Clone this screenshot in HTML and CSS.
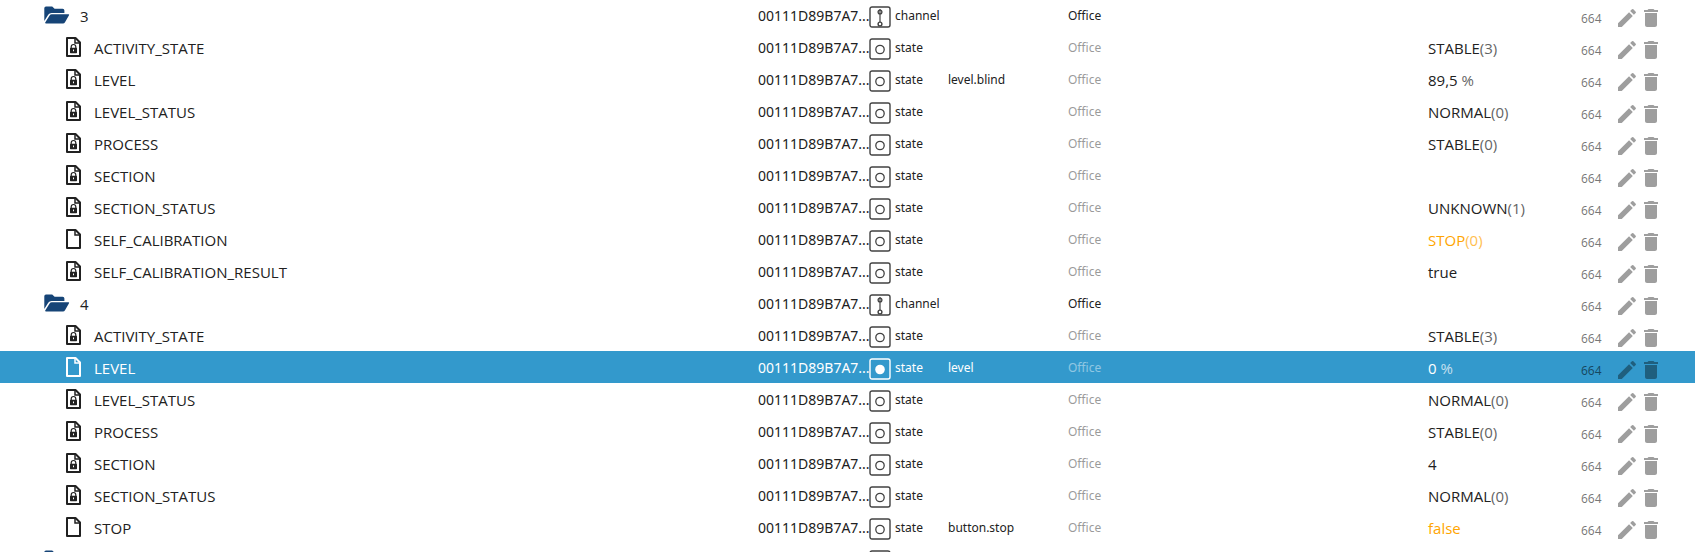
FILE: index.html
```html
<!DOCTYPE html>
<html lang="en">
<head>
    <meta charset="UTF-8">
    <title>Objects</title>
    <link rel="stylesheet" href="styles.css">
</head>
<body>
<svg class="symbols" aria-hidden="true">
    <symbol id="folder" viewBox="0 0 26 18">
        <path d="M0.3 2.2Q0.3 0.4 2 0.4H8.2L10.6 2.8H18.6Q20.4 2.8 20.4 4.6V7H7.6Q5.4 7 4.2 8.8L0.3 15Z"/>
        <path d="M1.2 16.6L5.6 9.4Q6.3 8.2 7.8 8.2H24.4Q25.6 8.2 25 9.3L21 16.2Q20.3 17.4 19 17.4H1.8Q0.8 17.4 1.2 16.6Z"/>
    </symbol>
    <symbol id="file" viewBox="0 0 15 20">
        <path d="M1 1H9.5L14 5.5V19H1Z" fill="none" stroke="currentColor" stroke-width="2" stroke-linejoin="round"/>
        <path d="M9 1V6H14" fill="none" stroke="currentColor" stroke-width="1.5"/>
    </symbol>
    <symbol id="locked" viewBox="0 0 15 20">
        <use href="#file"/>
        <path d="M5.2 11V9.8A2.3 2.3 0 0 1 9.8 9.8V11" fill="none" stroke="currentColor" stroke-width="1.2"/>
        <path fill-rule="evenodd" d="M4.6 10.8H10.4Q11 10.8 11 11.4V15.6Q11 16.2 10.4 16.2H4.6Q4 16.2 4 15.6V11.4Q4 10.8 4.6 10.8ZM7 12.6V14.2H8V12.6Z"/>
    </symbol>
    <symbol id="state" viewBox="0 0 22 22">
        <rect x="1" y="1" width="20" height="20" rx="2" fill="none" stroke="currentColor" stroke-width="1.4"/>
        <circle cx="11" cy="11.5" r="4.2" fill="none" stroke="currentColor" stroke-width="1.3"/>
    </symbol>
    <symbol id="state-on" viewBox="0 0 22 22">
        <rect x="1" y="1" width="20" height="20" rx="2" fill="none" stroke="currentColor" stroke-width="1.4"/>
        <circle cx="11" cy="11.5" r="4.8"/>
    </symbol>
    <symbol id="channel" viewBox="0 0 22 22">
        <rect x="1" y="1" width="20" height="20" rx="2" fill="none" stroke="currentColor" stroke-width="1.4"/>
        <path d="M11 3V16" stroke="currentColor" stroke-width="1.2"/>
        <circle cx="11" cy="6" r="1.9" fill="none" stroke="currentColor" stroke-width="1.3"/>
        <circle cx="11" cy="18" r="1.9" fill="none" stroke="currentColor" stroke-width="1.4"/>
    </symbol>
    <symbol id="edit" viewBox="0 0 24 24">
        <path d="M3 17.25V21h3.75L17.81 9.94l-3.75-3.75L3 17.25zM20.71 7.04c.39-.39.39-1.02 0-1.41l-2.34-2.34a.9959.9959 0 0 0-1.41 0l-1.83 1.83 3.75 3.75 1.83-1.83z"/>
    </symbol>
    <symbol id="delete" viewBox="0 0 24 24">
        <path d="M6 19c0 1.100.9 2 2 2h8c1.100 0 2-.9 2-2V7H6v12zM19 4h-3.500l-1-1h-5l-1 1H5v2h14V4z"/>
    </symbol>
</svg>
<div class="tree">
    <table>
        <colgroup>
            <col>
            <col class="col-id">
            <col class="col-type">
            <col class="col-role">
            <col class="col-room">
            <col class="col-value">
            <col class="col-rights">
            <col class="col-actions">
        </colgroup>
        <tbody id="rows"></tbody>
    </table>
</div>
<script src="tree.js"></script>
</body>
</html>
```
FILE: styles.css
```css
*{
    margin: 0;
    padding: 0;
    box-sizing: border-box;
}
body{
    background: white;
    color: #212121;
    font-family: "Noto Sans", sans-serif;
}
svg{
    display: block;
    fill: currentColor;
}
.symbols{
    display: none;
}
.tree{
    height: 100vh;
    overflow: hidden;
}
table{
    width: 100%;
    margin-top: -1px;
    table-layout: fixed;
    border-collapse: collapse;
}
.col-id{
    width: 111px;
}
.col-type{
    width: 79px;
}
.col-role{
    width: 120px;
}
.col-room{
    width: 360px;
}
.col-value{
    width: 153px;
}
.col-rights{
    width: 34px;
}
.col-actions{
    width: 80px;
}
td{
    height: 32px;
    padding-top: 2px;
    vertical-align: top;
    font-size: 12px;
    line-height: 30px;
    white-space: nowrap;
}
.cell{
    display: flex;
    height: 30px;
}
.name{
    padding-left: 66px;
    gap: 13px;
    font-family: "Open Sans", sans-serif;
    font-size: 15px;
}
.name svg{
    width: 15px;
    height: 20px;
    margin-top: 4px;
}
.folder .name{
    padding-left: 44px;
    gap: 10px;
}
.folder .name svg{
    width: 26px;
    height: 18px;
    margin-top: 5px;
    color: #164477;
}
.id{
    font-size: 14px;
}
.type{
    gap: 4px;
}
.type svg{
    width: 22px;
    height: 22px;
    margin-top: 5px;
    color: #424242;
}
.room{
    opacity: 0.45;
}
.folder .room{
    opacity: 1;
}
.value{
    font-family: "Open Sans", sans-serif;
    font-size: 15px;
}
.value small{
    font-size: 15px;
    opacity: 0.7;
}
.unconfirmed{
    color: orange;
}
.rights{
    padding-top: 8px;
    color: rgba(0, 0, 0, 0.54);
    line-height: 24px;
}
.actions{
    padding-top: 5px;
}
button{
    width: 24px;
    height: 24px;
    border: none;
    background: none;
    color: rgba(0, 0, 0, 0.38);
    cursor: pointer;
}
button svg{
    width: 24px;
    height: 24px;
}
.selected{
    background: #3399cc;
    color: white;
}
.selected .type svg{
    color: white;
}
```
FILE: tree.js
```javascript
// icon, name, role, value, value suffix, unconfirmed
var items=[
    ['folder','3'],
    ['locked','ACTIVITY_STATE','','STABLE','(3)'],
    ['locked','LEVEL','level.blind','89,5',' %'],
    ['locked','LEVEL_STATUS','','NORMAL','(0)'],
    ['locked','PROCESS','','STABLE','(0)'],
    ['locked','SECTION'],
    ['locked','SECTION_STATUS','','UNKNOWN','(1)'],
    ['file','SELF_CALIBRATION','','STOP','(0)',true],
    ['locked','SELF_CALIBRATION_RESULT','','true'],
    ['folder','4'],
    ['locked','ACTIVITY_STATE','','STABLE','(3)'],
    ['file','LEVEL','level','0',' %'],
    ['locked','LEVEL_STATUS','','NORMAL','(0)'],
    ['locked','PROCESS','','STABLE','(0)'],
    ['locked','SECTION','','4'],
    ['locked','SECTION_STATUS','','NORMAL','(0)'],
    ['file','STOP','button.stop','false','',true],
    ['folder','5']
];
var selected=11;
var oRows=document.getElementById('rows');

function icon(name) {
    return '<svg aria-hidden="true"><use href="#'+name+'"/></svg>';
}

function row(item,index) {
    var isFolder=item[0]=='folder';
    var type=isFolder?'channel':'state';
    var typeIcon=index==selected?'state-on':type;
    var cls=isFolder?'folder':'';
    if (index==selected) {
        cls='selected';
    }
    return '<tr class="'+cls+'">'+
        '<td><div class="cell name">'+icon(item[0])+'<span>'+item[1]+'</span></div></td>'+
        '<td class="id">00111D89B7A7...</td>'+
        '<td><div class="cell type">'+icon(typeIcon)+'<span>'+type+'</span></div></td>'+
        '<td>'+(item[2]||'')+'</td>'+
        '<td><span class="room">Office</span></td>'+
        '<td class="value'+(item[5]?' unconfirmed':'')+'">'+(item[3]||'')+
        (item[4]?'<small>'+item[4]+'</small>':'')+'</td>'+
        '<td class="rights">664</td>'+
        '<td><div class="cell actions">'+
        '<button aria-label="Edit">'+icon('edit')+'</button>'+
        '<button aria-label="Delete">'+icon('delete')+'</button>'+
        '</div></td></tr>';
}

oRows.innerHTML=items.map(row).join('');
```
